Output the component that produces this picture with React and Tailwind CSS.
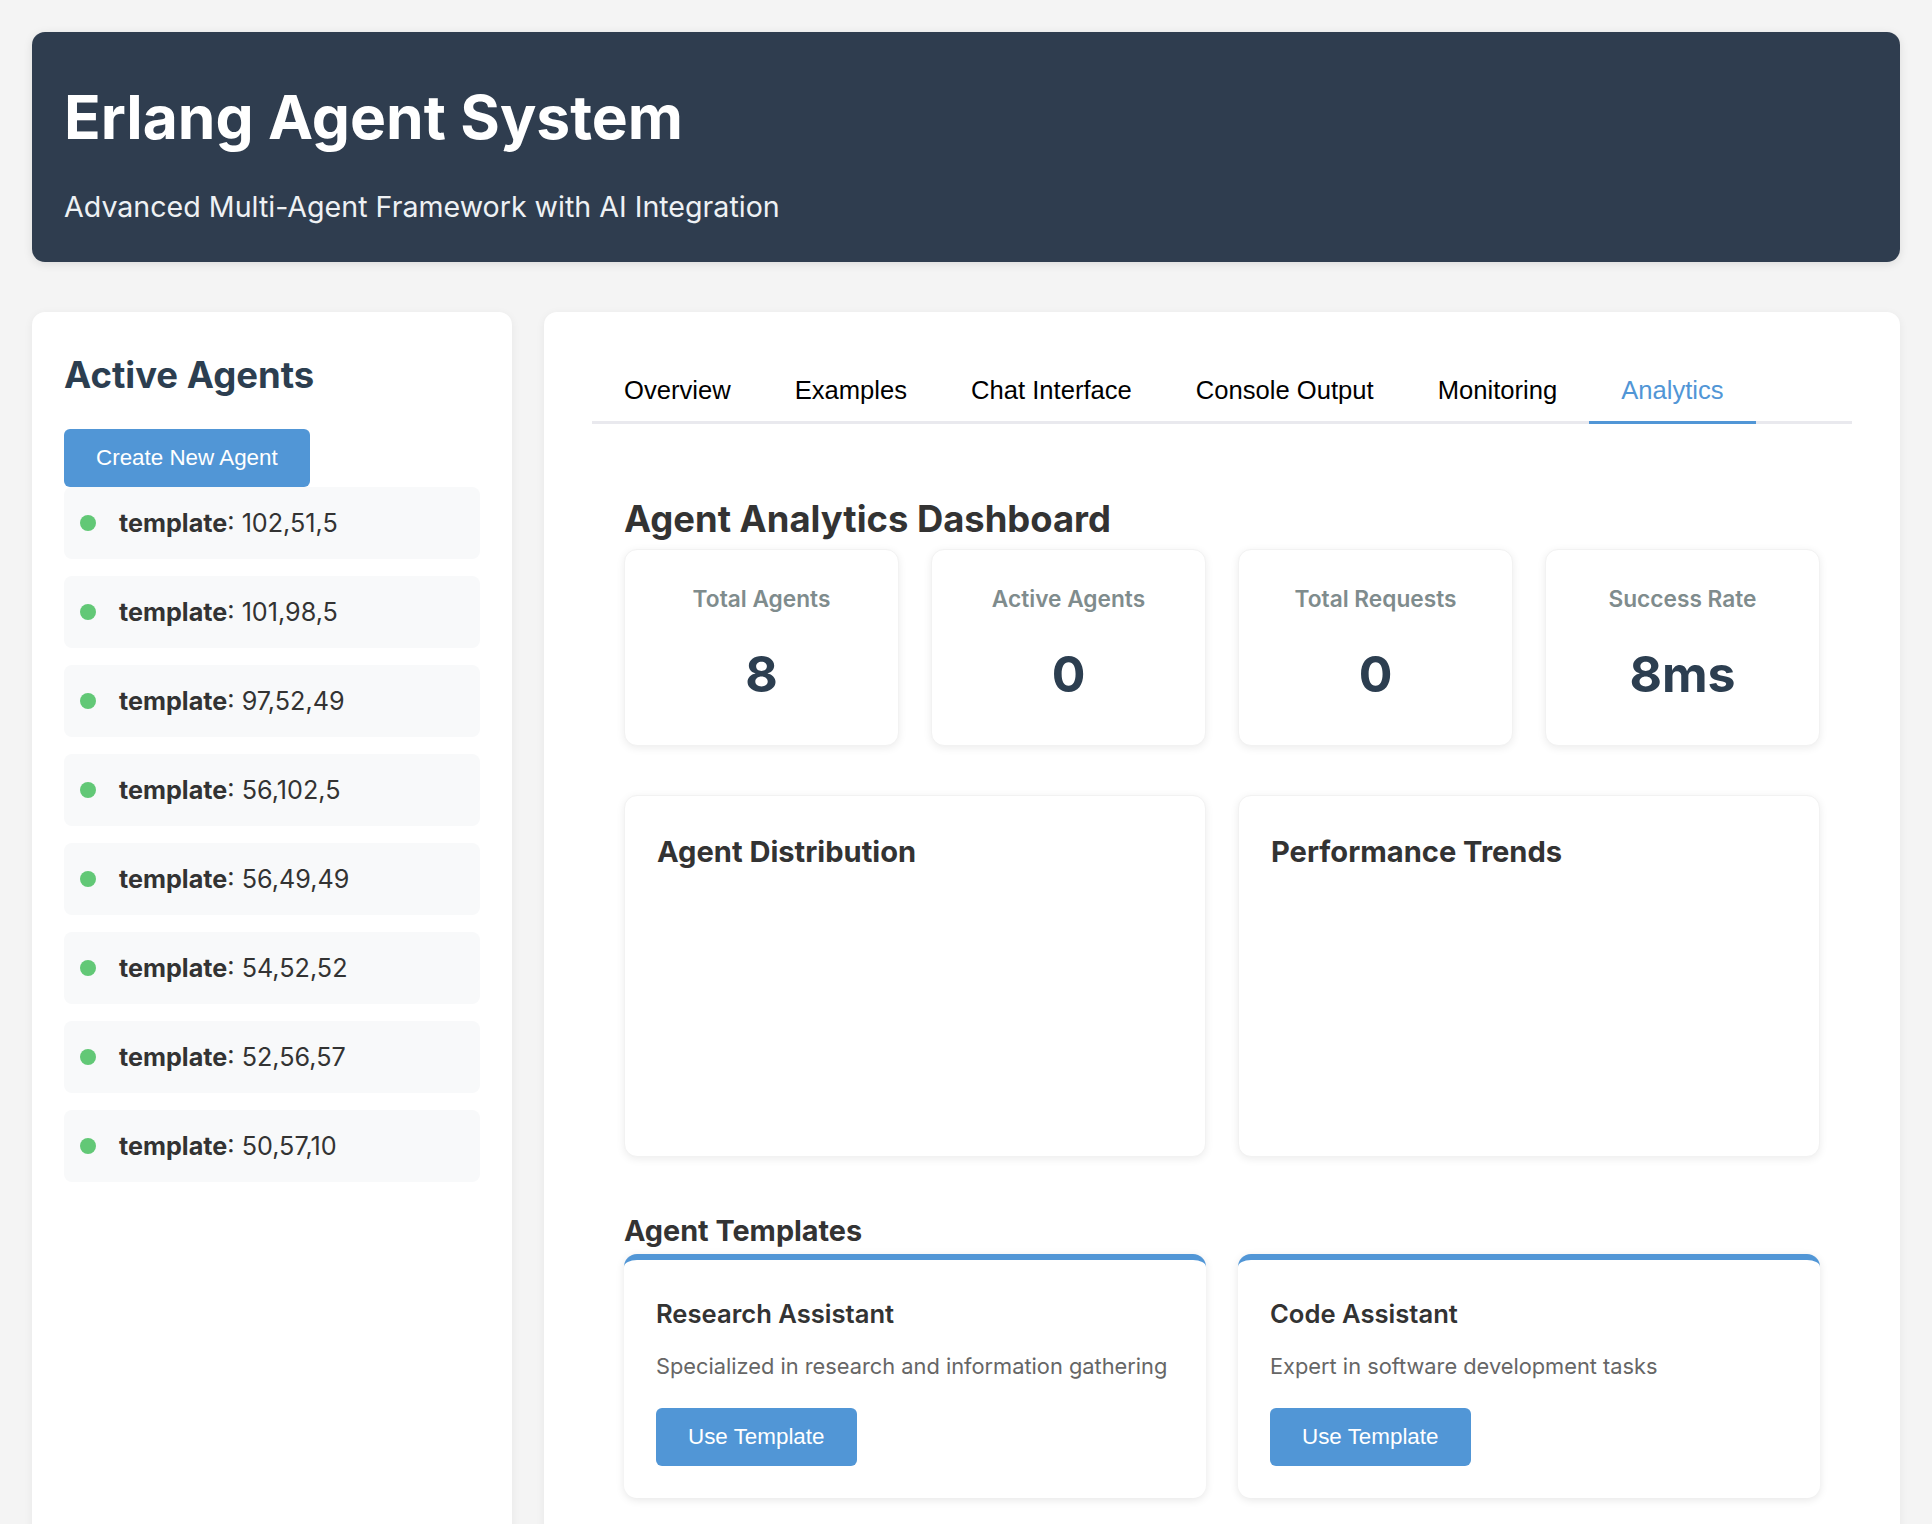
import React from "react";

const agents = [
  "102,51,5",
  "101,98,5",
  "97,52,49",
  "56,102,5",
  "56,49,49",
  "54,52,52",
  "52,56,57",
  "50,57,10",
];

const tabs = ["Overview", "Examples", "Chat Interface", "Console Output", "Monitoring", "Analytics"];

const stats = [
  { label: "Total Agents", value: "8" },
  { label: "Active Agents", value: "0" },
  { label: "Total Requests", value: "0" },
  { label: "Success Rate", value: "8ms" },
];

const templates = [
  { title: "Research Assistant", desc: "Specialized in research and information gathering" },
  { title: "Code Assistant", desc: "Expert in software development tasks" },
];

export default function App() {
  return (
    <div className="min-h-screen bg-[#f4f4f4] px-[32px] pt-[32px] pb-[48px] font-[family-name:Inter,'Noto_Sans',sans-serif] text-[#333]">
      {/* Header */}
      <header className="rounded-[13px] bg-[#2f3d4f] px-[32px] pt-[49px] pb-[34px] shadow-[0_2px_10px_rgba(0,0,0,0.1)]">
        <h1 className="text-[60.5px] leading-[72px] font-bold text-white">Erlang Agent System</h1>
        <p className="mt-[33px] text-[28.6px] leading-[42px] text-[#eef1f4]">Advanced Multi-Agent Framework with AI Integration</p>
      </header>

      <div className="mt-[50px] grid grid-cols-[480px_1fr] gap-[32px]">
        {/* Sidebar */}
        <aside className="rounded-[13px] bg-white px-[32px] pt-[41px] pb-[32px] shadow-[0_2px_10px_rgba(0,0,0,0.06)]">
          <h2 className="text-[36.5px] leading-[44px] font-bold text-[#2c3e50]">Active Agents</h2>
          <button className="mt-[32px] h-[58px] rounded-[6px] bg-[#5196d6] px-[32px] text-[22.4px] text-white font-[family-name:'Liberation_Sans',Arial,sans-serif]">
            Create New Agent
          </button>
          <div className="flex flex-col gap-[17px]">
            {agents.map((a) => (
              <div key={a} className="flex h-[72px] items-center rounded-[8px] bg-[#f8f9fa] px-[16px]">
                <span className="h-[16px] w-[16px] shrink-0 rounded-full bg-[#62c876]" />
                <span className="ml-[23px] text-[25.2px] leading-[32px] text-[#333]">
                  <strong className="font-bold">template</strong>: {a}
                </span>
              </div>
            ))}
          </div>
        </aside>

        {/* Main */}
        <main className="rounded-[13px] bg-white px-[48px] pt-[48px] pb-[48px] shadow-[0_2px_10px_rgba(0,0,0,0.06)]">
          <nav className="flex border-b-[3px] border-[#e9e9ee] font-[family-name:'Liberation_Sans',Arial,sans-serif]">
            {tabs.map((t) => {
              const active = t === "Analytics";
              return (
                <button
                  key={t}
                  className={
                    active
                      ? "-mb-[3px] border-b-[3px] border-[#5196d6] px-[32px] py-[16px] text-[25.6px] leading-[29px] text-[#5196d6]"
                      : "-mb-[3px] border-b-[3px] border-transparent px-[32px] py-[16px] text-[25.6px] leading-[29px] text-black"
                  }
                >
                  {t}
                </button>
              );
            })}
          </nav>

          <section className="px-[32px] pt-[74px]">
            <h2 className="mb-[8px] text-[36.4px] leading-[43px] font-bold text-[#333]">Agent Analytics Dashboard</h2>

            <div className="grid grid-cols-4 gap-[32px]">
              {stats.map((s) => (
                <div
                  key={s.label}
                  className="flex flex-col items-center rounded-[13px] border border-[#f2f2f2] bg-white pt-[34px] pb-[41px] shadow-[0_2px_8px_rgba(0,0,0,0.08)]"
                >
                  <div className="text-[22.7px] leading-[29px] font-semibold text-[#7f8c8d]">{s.label}</div>
                  <div className="mt-[31px] text-[50px] leading-[60px] font-bold text-[#2c3e50]">{s.value}</div>
                </div>
              ))}
            </div>

            <div className="mt-[49px] grid grid-cols-2 gap-[32px]">
              {["Agent Distribution", "Performance Trends"].map((t) => (
                <div
                  key={t}
                  className="h-[362px] rounded-[13px] border border-[#f2f2f2] bg-white px-[32px] pt-[38px] shadow-[0_2px_8px_rgba(0,0,0,0.08)]"
                >
                  <h3 className="text-[29.1px] leading-[36px] font-bold text-[#333]">{t}</h3>
                </div>
              ))}
            </div>

            <h2 className="mt-[57px] mb-[7px] text-[28.8px] leading-[33px] font-bold text-[#333]">Agent Templates</h2>

            <div className="grid grid-cols-2 gap-[32px]">
              {templates.map((t) => (
                <div
                  key={t.title}
                  className="rounded-[13px] border-t-[6px] border-[#5196d6] bg-white px-[32px] pt-[38px] pb-[32px] shadow-[0_2px_8px_rgba(0,0,0,0.1)]"
                >
                  <h3 className="text-[25.6px] leading-[31px] font-semibold text-[#333]">{t.title}</h3>
                  <p className="mt-[21px] text-[21.8px] leading-[32px] text-[#666]">{t.desc}</p>
                  <button className="mt-[26px] h-[58px] rounded-[6px] bg-[#5196d6] px-[32px] text-[22.4px] text-white font-[family-name:'Liberation_Sans',Arial,sans-serif]">
                    Use Template
                  </button>
                </div>
              ))}
            </div>
          </section>
        </main>
      </div>
    </div>
  );
}
